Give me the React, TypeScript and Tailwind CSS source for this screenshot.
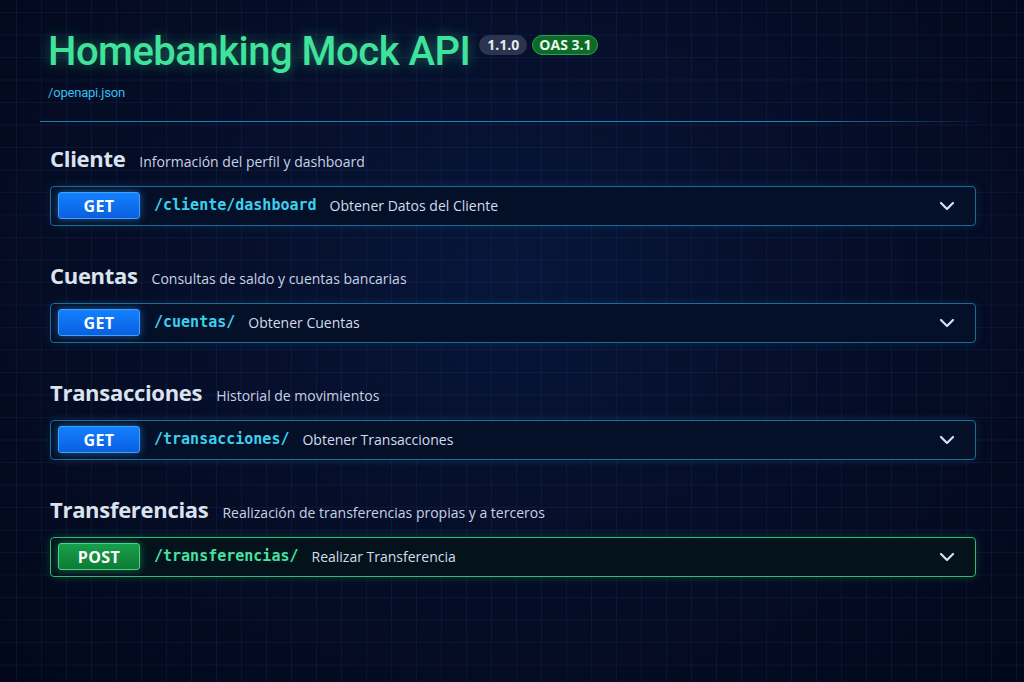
import { ChevronDown } from 'lucide-react'

type Endpoint = {
    method: 'GET' | 'POST'
    path: string
    summary: string
}

type Section = {
    name: string
    description: string
    endpoints: Endpoint[]
}

const SECTIONS: Section[] = [
    {
        name: 'Cliente',
        description: 'Información del perfil y dashboard',
        endpoints: [{ method: 'GET', path: '/cliente/dashboard', summary: 'Obtener Datos del Cliente' }],
    },
    {
        name: 'Cuentas',
        description: 'Consultas de saldo y cuentas bancarias',
        endpoints: [{ method: 'GET', path: '/cuentas/', summary: 'Obtener Cuentas' }],
    },
    {
        name: 'Transacciones',
        description: 'Historial de movimientos',
        endpoints: [{ method: 'GET', path: '/transacciones/', summary: 'Obtener Transacciones' }],
    },
    {
        name: 'Transferencias',
        description: 'Realización de transferencias propias y a terceros',
        endpoints: [{ method: 'POST', path: '/transferencias/', summary: 'Realizar Transferencia' }],
    },
]

function EndpointRow({ endpoint }: { endpoint: Endpoint }) {
    const post = endpoint.method === 'POST'
    return (
        <div
            className={
                post
                    ? 'flex h-10 items-center rounded-[4px] border border-[#27c06a] bg-[#04121c] pl-[7px] pr-[16px] shadow-[0_0_10px_rgba(39,192,106,0.25)]'
                    : 'flex h-10 items-center rounded-[4px] border border-[#1b6c98] bg-[#040f28] pl-[7px] pr-[16px] shadow-[0_0_10px_rgba(27,108,152,0.25)]'
            }
        >
            <span
                className={
                    post
                        ? 'flex h-[27px] w-[82px] items-center justify-center rounded-[3px] border border-[#3fd986] bg-[linear-gradient(#17a04a,#0f7a36)] text-[16px] font-bold tracking-wide text-white shadow-[0_0_8px_rgba(63,217,134,0.45)]'
                        : 'flex h-[27px] w-[82px] items-center justify-center rounded-[3px] border border-[#3aa4ff] bg-[linear-gradient(#1380ff,#0a5fe0)] text-[16px] font-bold tracking-wide text-white shadow-[0_0_8px_rgba(58,164,255,0.5)]'
                }
            >
                {endpoint.method}
            </span>
            <span
                className={
                    post
                        ? "ml-[14px] font-['DejaVu_Sans_Mono',monospace] text-[15px] font-bold text-[#46e0a0]"
                        : "ml-[14px] font-['DejaVu_Sans_Mono',monospace] text-[15px] font-bold text-[#3ccfee]"
                }
            >
                {endpoint.path}
            </span>
            <span className="ml-[13px] text-[14px] text-[#d4dcea]">{endpoint.summary}</span>
            <ChevronDown className="ml-auto h-6 w-6 text-[#cfe4f7]" strokeWidth={2.2} />
        </div>
    )
}

export default function App() {
    return (
        <div className="h-[682px] w-[1024px] overflow-hidden bg-[radial-gradient(ellipse_at_50%_40%,#08163a_0%,#050d26_55%,#02081a_100%)] font-['Open_Sans',sans-serif]">
            <div className="h-full w-full bg-[linear-gradient(rgba(50,80,170,0.14)_1px,transparent_1px),linear-gradient(90deg,rgba(50,80,170,0.14)_1px,transparent_1px)] bg-[size:25px_22.5px] bg-[position:16px_12px]">
                <header className="px-12 pt-[26px]">
                    <div className="flex items-start gap-[5px]">
                        <h1 className="font-['Roboto',sans-serif] text-[40px] leading-[52px] font-medium tracking-[-0.5px] text-[#3fe39b] [text-shadow:0_0_14px_rgba(63,227,155,0.45)]">
                            Homebanking Mock API
                        </h1>
                        <span className="mt-[9px] ml-[4px] rounded-full bg-[#2c3550] px-[8px] py-[1px] text-[14px] leading-[18px] font-bold text-[#e6ebf3]">
                            1.1.0
                        </span>
                        <span className="mt-[9px] rounded-full border border-[#24a24c] bg-[#0d6a27] px-[6px] text-[14px] leading-[18px] font-bold text-[#e8f7ec]">
                            OAS 3.1
                        </span>
                    </div>
                    <div className="mt-[5px] font-['Roboto',sans-serif] text-[13px] tracking-[-0.2px] text-[#34bff0]">
                        /openapi.json
                    </div>
                </header>
                <div className="mt-[18px] ml-10 h-px w-[950px] bg-[linear-gradient(90deg,#1a7fb5,#1d86bd_80%,rgba(29,134,189,0))]" />
                <main className="flex flex-col gap-[34px] pt-[21px] pr-[48px] pl-[50px]">
                    {SECTIONS.map((section) => (
                        <section key={section.name} className="flex flex-col gap-[13px]">
                            <div className="flex items-baseline gap-[14px]">
                                <h2 className="text-[22px] leading-[30px] font-bold tracking-[-0.3px] text-[#dbe3ef]">
                                    {section.name}
                                </h2>
                                <span className="text-[14px] text-[#c9d2e2]">{section.description}</span>
                            </div>
                            {section.endpoints.map((ep) => (
                                <EndpointRow key={ep.path} endpoint={ep} />
                            ))}
                        </section>
                    ))}
                </main>
            </div>
        </div>
    )
}
